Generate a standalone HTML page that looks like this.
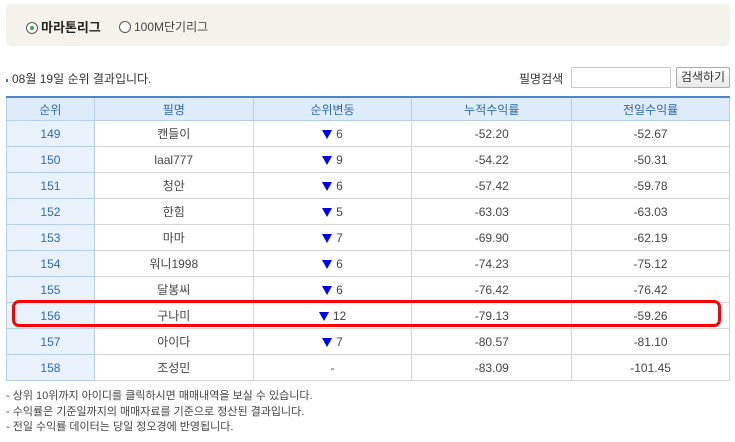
<!DOCTYPE html>
<html><head><meta charset="utf-8"><style>
body{margin:0;background:#fff;font-family:"Liberation Sans","Noto Sans CJK KR",sans-serif;font-size:12px;color:#444;width:735px;height:442px;position:relative;overflow:hidden}
.top{position:absolute;left:6px;top:4px;width:724px;height:42px;background:#f5f2ec;border-radius:5px}
.r{position:absolute;top:14px;font-size:12px}
.rad{display:inline-block;width:10px;height:10px;border:1px solid #555;border-radius:50%;vertical-align:-2px;margin-right:3px;position:relative;background:#fff}
.rad.on::after{content:"";position:absolute;left:3px;top:3px;width:4px;height:4px;border-radius:50%;background:#3a3}
.title{position:absolute;left:6px;top:70px;font-size:12px;color:#333}
.title i{display:inline-block;width:2px;height:3px;background:#3a7ac0;vertical-align:1px;margin-right:4px}
.srch{position:absolute;left:519px;top:70px;font-size:12px;color:#333}
.inp{position:absolute;left:571px;top:67px;width:98px;height:19px;border:1px solid #ccc;background:#fff}
.btn{position:absolute;left:676px;top:67px;width:52px;height:19px;border:1px solid #aaa;border-radius:2px;background:linear-gradient(#fff,#e8e8e8);font-size:12px;text-align:center;line-height:19px;color:#333}
table{position:absolute;left:6px;top:96px;border-collapse:collapse;width:724px;border-top:2px solid #4a86c8}
td,th{height:25px;border:1px solid #d4d4d4;text-align:center;font-weight:normal;padding:0;font-size:12px;color:#444}
th{background:#deebf9;color:#2f6aa8;border-color:#b5cfea;height:22px}
td:first-child{background:#e9f1fb;color:#2f6aa8;border-color:#b5cfea}
.tri{display:inline-block;width:0;height:0;border-left:5px solid transparent;border-right:5px solid transparent;border-top:9px solid #00f;margin-right:4px;vertical-align:-1px}
.red{position:absolute;left:12px;top:300px;width:703px;height:21px;border:3px solid #f00;border-radius:7px}
.notes{position:absolute;left:6px;top:389px;font-size:11px;color:#444;line-height:15.5px}
</style></head><body>
<div class="top">
<span class="r" style="left:20px;top:13px;font-weight:bold;color:#222;font-size:13px"><span class="rad on"></span>마라톤리그</span>
<span class="r" style="left:113px;color:#444"><span class="rad"></span>100M단기리그</span>
</div>
<div class="title"><i></i>08월 19일 순위 결과입니다.</div>
<div class="srch">필명검색</div><div class="inp"></div><div class="btn">검색하기</div>
<table>
<colgroup><col style="width:88px"><col style="width:159px"><col style="width:159px"><col style="width:160px"><col style="width:158px"></colgroup>
<tr><th>순위</th><th>필명</th><th>순위변동</th><th>누적수익률</th><th>전일수익률</th></tr>
<tr><td>149</td><td>캔들이</td><td><span class="tri"></span>6</td><td>-52.20</td><td>-52.67</td></tr>
<tr><td>150</td><td>laal777</td><td><span class="tri"></span>9</td><td>-54.22</td><td>-50.31</td></tr>
<tr><td>151</td><td>청안</td><td><span class="tri"></span>6</td><td>-57.42</td><td>-59.78</td></tr>
<tr><td>152</td><td>한힘</td><td><span class="tri"></span>5</td><td>-63.03</td><td>-63.03</td></tr>
<tr><td>153</td><td>마마</td><td><span class="tri"></span>7</td><td>-69.90</td><td>-62.19</td></tr>
<tr><td>154</td><td>워니1998</td><td><span class="tri"></span>6</td><td>-74.23</td><td>-75.12</td></tr>
<tr><td>155</td><td>달봉씨</td><td><span class="tri"></span>6</td><td>-76.42</td><td>-76.42</td></tr>
<tr><td>156</td><td>구나미</td><td><span class="tri"></span>12</td><td>-79.13</td><td>-59.26</td></tr>
<tr><td>157</td><td>아이다</td><td><span class="tri"></span>7</td><td>-80.57</td><td>-81.10</td></tr>
<tr><td>158</td><td>조성민</td><td>-</td><td>-83.09</td><td>-101.45</td></tr>
</table>
<div class="red"></div>
<div class="notes">- 상위 10위까지 아이디를 클릭하시면 매매내역을 보실 수 있습니다.<br>- 수익률은 기준일까지의 매매자료를 기준으로 정산된 결과입니다.<br>- 전일 수익률 데이터는 당일 정오경에 반영됩니다.</div>
</body></html>
